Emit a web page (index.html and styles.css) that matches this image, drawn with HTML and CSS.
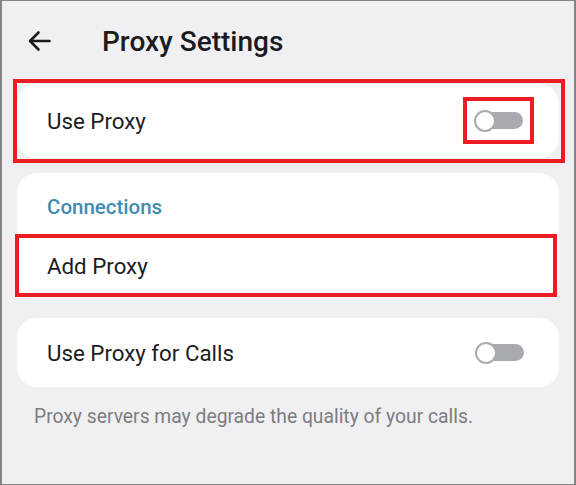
FILE: index.html
```html
<!DOCTYPE html>
<html lang="en">
<head>
<meta charset="utf-8">
<title>Proxy Settings</title>
<link rel="stylesheet" href="styles.css">
</head>
<body>
<div class="frame">
  <header class="topbar">
    <svg class="back" width="24" height="22" viewBox="0 0 24 22" aria-hidden="true">
      <path d="M22.5 11H3 M11.5 2.5L3 11l8.5 8.5" fill="none" stroke="#1b1b1f" stroke-width="2.6" stroke-linecap="round" stroke-linejoin="round"/>
    </svg>
    <h1 class="title">Proxy Settings</h1>
  </header>

  <div class="mark-box">
    <section class="card card-use">
      <span class="label">Use Proxy</span>
      <span class="toggle-mark">
        <span class="toggle"><span class="knob"></span></span>
      </span>
    </section>
  </div>

  <section class="card card-conn">
    <div class="section-head">Connections</div>
    <div class="row-add">
      <span class="label">Add Proxy</span>
    </div>
  </section>

  <section class="card card-calls">
    <span class="label">Use Proxy for Calls</span>
    <span class="toggle"><span class="knob"></span></span>
  </section>

  <p class="note">Proxy servers may degrade the quality of your calls.</p>
</div>
</body>
</html>
```

FILE: styles.css
```css
* { box-sizing: border-box; }
html, body { margin: 0; padding: 0; }
body {
  font-family: Roboto, "Noto Sans", "Liberation Sans", sans-serif;
  background: #f1f1f4;
}
.frame {
  width: 576px;
  height: 485px;
  background: #f0f0f3;
  border: 2px solid #858585;
  border-top-width: 1px;
  border-bottom-width: 1px;
  padding: 0 15px;
  display: flex;
  flex-direction: column;
}
.topbar {
  height: 78px;
  flex: none;
  display: flex;
  align-items: center;
  padding-left: 10px;
  padding-bottom: 0;
  padding-top: 2px;
}
.back { flex: none; }
.title {
  margin: 0 0 0 51px;
  font-size: 28px;
  font-weight: 500;
  color: #1b1b1f;
}
.card {
  background: #ffffff;
  border-radius: 20px;
}
.mark-box {
  flex: none;
  border: 4px solid #ec1c24;
  padding: 1px 2px 1px 0;
  margin: 0 -6px 0 -4px;
}
.card-use {
  height: 74px;
  display: flex;
  align-items: center;
  justify-content: space-between;
  padding: 0 25px 0 30px;
}
.label {
  font-size: 22.3px;
  color: #1c1c1f;
}
.toggle-mark {
  display: flex;
  align-items: center;
  justify-content: center;
  width: 71px;
  height: 47px;
  border: 4px solid #ec1c24;
  margin-top: -1px;
}
.toggle {
  position: relative;
  width: 48px;
  height: 17px;
  border-radius: 9px;
  background: #a7abb0;
  display: block;
  flex: none;
}
.knob {
  position: absolute;
  left: -1px;
  top: -2.5px;
  width: 22px;
  height: 22px;
  border-radius: 50%;
  background: #ffffff;
  border: 2px solid #a7abb0;
}
.card-conn {
  flex: none;
  margin-top: 10px;
  height: 125px;
  display: flex;
  flex-direction: column;
}
.section-head {
  height: 61px;
  display: flex;
  align-items: center;
  padding-left: 30px;
  padding-top: 6px;
  font-size: 20.5px;
  font-weight: 500;
  color: #3f8db1;
}
.row-add {
  height: 63px;
  margin: 0 2px 0 -2px;
  border: 4px solid #ec1c24;
  display: flex;
  align-items: center;
  padding-left: 28px;
}
.card-calls {
  flex: none;
  margin-top: 20px;
  height: 69px;
  display: flex;
  align-items: center;
  justify-content: space-between;
  padding: 0 35px 0 30px;
}
.note {
  margin: 19px 0 0 2px;
  padding-left: 15px;
  font-size: 19.3px;
  line-height: 22px;
  color: #7d7d80;
}
```
